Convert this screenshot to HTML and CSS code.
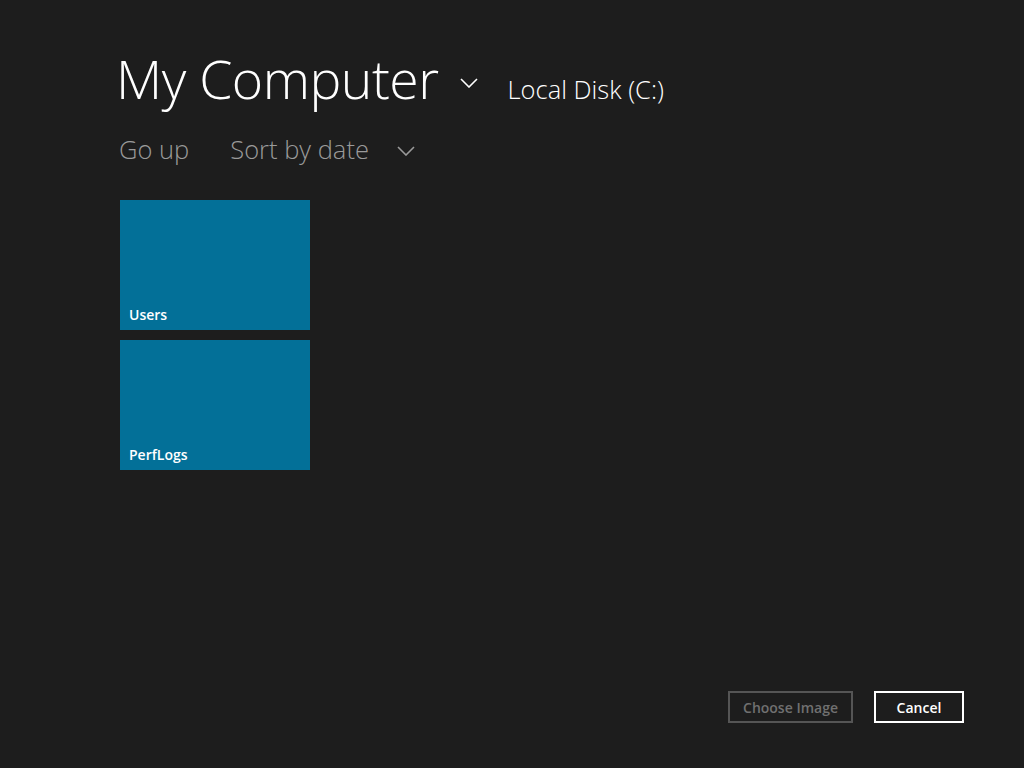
FILE: index.html
```html
<!DOCTYPE html>
<html>
<head>
<meta charset="utf-8">
<link rel="stylesheet" href="styles.css">
</head>
<body>
<div class="page">
  <header class="header">
    <h1 class="title">My Computer</h1>
    <svg class="chev chev-title" viewBox="0 0 18 10" width="18" height="10"><path d="M1 1 L9 9 L17 1" fill="none" stroke="#ffffff" stroke-width="1.6"/></svg>
    <span class="location">Local Disk (C:)</span>
  </header>
  <nav class="toolbar">
    <span class="tool">Go up</span>
    <span class="tool sort">Sort by date</span>
    <svg class="chev chev-sort" viewBox="0 0 18 10" width="18" height="10"><path d="M1 1 L9 9 L17 1" fill="none" stroke="#9a9a9a" stroke-width="1.6"/></svg>
  </nav>
  <section class="tiles">
    <div class="tile"><span class="tile-label">Users</span></div>
    <div class="tile"><span class="tile-label">PerfLogs</span></div>
  </section>
  <footer class="actions">
    <button class="btn btn-disabled">Choose Image</button>
    <button class="btn btn-primary">Cancel</button>
  </footer>
</div>
</body>
</html>
```
FILE: styles.css
```css
html, body {
  margin: 0;
  padding: 0;
  background: #1d1d1d;
  height: 100%;
}
.page {
  box-sizing: border-box;
  height: 768px;
  padding: 45px 60px 45px 116px;
  display: flex;
  flex-direction: column;
  font-family: "Open Sans", "Noto Sans", sans-serif;
  color: #ffffff;
}
.header {
  display: flex;
  align-items: baseline;
  height: 68px;
}
.title {
  margin: 0;
  font-size: 53.5px;
  font-weight: 300;
  line-height: 68px;
  letter-spacing: -0.5px;
}
.chev-title {
  margin-left: 21px;
  align-self: center;
  position: relative;
  top: 4px;
}
.location {
  margin-left: 30px;
  font-size: 25.5px;
  font-weight: 300;
  letter-spacing: 0;
}
.toolbar {
  display: flex;
  align-items: center;
  margin-top: 16px;
  height: 40px;
  color: #9a9a9a;
  font-size: 25.5px;
  font-weight: 300;
}
.tool {
  margin-left: 3px;
}
.sort {
  margin-left: 41px;
}
.chev-sort {
  margin-left: 28px;
  position: relative;
  top: 2px;
}
.tiles {
  margin-top: 31px;
  margin-left: 4px;
  display: flex;
  flex-direction: column;
  gap: 10px;
}
.tile {
  width: 190px;
  height: 130px;
  background: #037098;
  display: flex;
  align-items: flex-end;
  box-sizing: border-box;
  padding: 0 9px 6px;
}
.tile-label {
  font-size: 14px;
  font-weight: 600;
  color: #ffffff;
}
.actions {
  margin-top: auto;
  display: flex;
  justify-content: flex-end;
  gap: 21px;
}
.btn {
  box-sizing: border-box;
  height: 32px;
  font-family: "Open Sans", "Noto Sans", sans-serif;
  font-size: 14px;
  font-weight: 600;
  background: #1d1d1d;
  padding: 0;
}
.btn-disabled {
  width: 125px;
  border: 2px solid #555555;
  color: #707070;
}
.btn-primary {
  width: 90px;
  border: 2px solid #ffffff;
  color: #ffffff;
}
```
